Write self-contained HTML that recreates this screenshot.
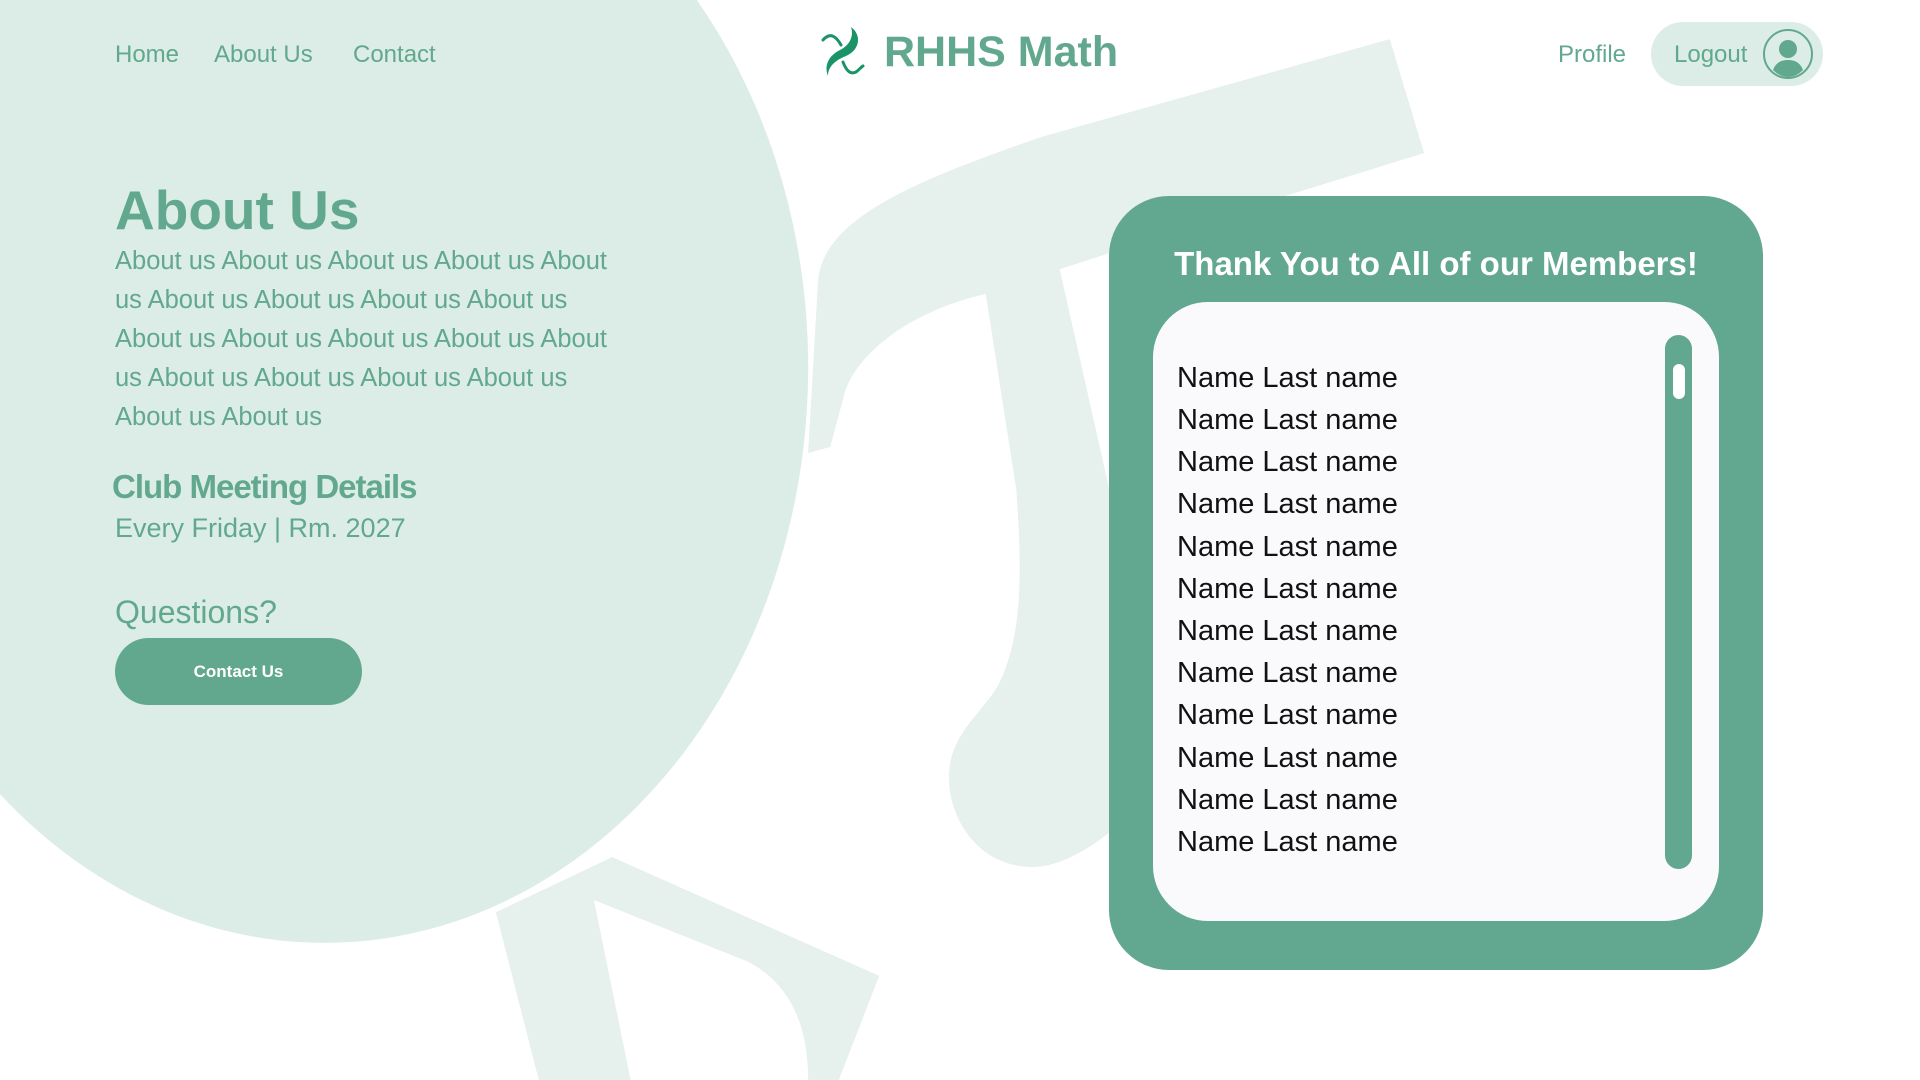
<!DOCTYPE html>
<html><head><meta charset="utf-8"><style>
html,body{margin:0;padding:0;width:1920px;height:1080px;overflow:hidden;background:#fff;font-family:"Liberation Sans",sans-serif;}
.abs{position:absolute;}
.nav{top:41px;font-size:24px;color:#62a88f;}
.g{color:#62a88f;}
.name{position:absolute;left:1177px;font-size:29px;color:#111;}
</style></head><body>
<svg class="abs" style="left:0;top:0" width="1920" height="1080" viewBox="0 0 1568 882" preserveAspectRatio="none">
<g fill="#e6f0ec">
<path d="M660,370 L668,230 C672,180 740,150 850,112 L1135,32 L1163,125 L1050,160 L865,220 L805,240 C740,255 700,290 690,320 L678,365 Z"/>
<path d="M805,240 L865,218 L906,400 L906,680 C880,700 860,708 843,708 C800,708 775,670 775,635 C775,600 800,585 815,560 C835,520 835,470 830,400 Z"/>
<path d="M405,745 L500,700 L718,797 L685,882 L660,882 C660,830 640,800 610,785 L485,735 L515,882 L440,882 Z"/>
</g>
<ellipse cx="265" cy="300" rx="395" ry="470" fill="#dbede6"/>
</svg>
<div class="abs nav" style="left:115px">Home</div>
<div class="abs nav" style="left:214px">About Us</div>
<div class="abs nav" style="left:353px">Contact</div>
<svg class="abs" style="left:810px;top:20px" width="70" height="70" viewBox="0 0 70 70">
<path d="M13,20 C20,12 26,16 31,25" stroke="#1a9466" stroke-width="3" fill="none" stroke-linecap="round"/>
<path d="M41,7 C52,15 50,30 36,36 C26,40 18,46 18,56 C14,46 18,36 30,30 C40,25 44,16 41,7 Z" fill="#1a9466"/>
<path d="M33,42 C36,50 40,55 46,52 C49,50 51,47 53,46" stroke="#1a9466" stroke-width="3" fill="none" stroke-linecap="round"/>
</svg>
<div class="abs g" style="left:884px;top:28px;font-size:43px;font-weight:bold;">RHHS Math</div>
<div class="abs nav" style="left:1558px">Profile</div>
<div class="abs" style="left:1651px;top:22px;width:172px;height:64px;border-radius:32px;background:#dbede6;"></div>
<div class="abs nav" style="left:1674px">Logout</div>
<svg class="abs" style="left:1762px;top:28px" width="52" height="52" viewBox="0 0 52 52">
<circle cx="26" cy="26" r="24" fill="none" stroke="#62a88f" stroke-width="2"/>
<circle cx="26" cy="21" r="9" fill="#62a88f"/>
<path d="M11,42 C14,34 20,32 26,32 C32,32 38,34 41,42 C36,47 31,49 26,49 C21,49 16,47 11,42 Z" fill="#62a88f"/>
</svg>
<div class="abs g" style="left:115px;top:178px;font-size:55px;font-weight:bold;">About Us</div>
<div class="abs g" style="left:115px;top:242px;width:500px;font-size:25.5px;line-height:39px;">About us About us About us About us About us About us About us About us About us About us About us About us About us About us About us About us About us About us About us About us</div>
<div class="abs g" style="left:112px;top:468px;font-size:33px;font-weight:bold;letter-spacing:-1px;">Club Meeting Details</div>
<div class="abs g" style="left:115px;top:513px;font-size:27px;">Every Friday | Rm. 2027</div>
<div class="abs g" style="left:115px;top:594px;font-size:32px;">Questions?</div>
<div class="abs" style="left:115px;top:638px;width:247px;height:67px;border-radius:34px;background:#62a88f;color:#fff;font-weight:bold;font-size:17px;line-height:67px;text-align:center;">Contact Us</div>
<div class="abs" style="left:1109px;top:196px;width:654px;height:774px;border-radius:60px;background:#62a890;"></div>
<div class="abs" style="left:1109px;top:245px;width:654px;text-align:center;color:#fff;font-weight:bold;font-size:33px;">Thank You to All of our Members!</div>
<div class="abs" style="left:1153px;top:302px;width:566px;height:619px;border-radius:55px;background:#fafafc;"></div>
<div class="abs" style="left:1665px;top:335px;width:27px;height:534px;border-radius:14px;background:#62a890;"></div>
<div class="abs" style="left:1673px;top:364px;width:12px;height:35px;border-radius:6px;background:#fff;"></div>
<div class="name" style="top:362px">Name Last name</div>
<div class="name" style="top:404px">Name Last name</div>
<div class="name" style="top:446px">Name Last name</div>
<div class="name" style="top:488px">Name Last name</div>
<div class="name" style="top:531px">Name Last name</div>
<div class="name" style="top:573px">Name Last name</div>
<div class="name" style="top:615px">Name Last name</div>
<div class="name" style="top:657px">Name Last name</div>
<div class="name" style="top:699px">Name Last name</div>
<div class="name" style="top:742px">Name Last name</div>
<div class="name" style="top:784px">Name Last name</div>
<div class="name" style="top:826px">Name Last name</div>
</body></html>
